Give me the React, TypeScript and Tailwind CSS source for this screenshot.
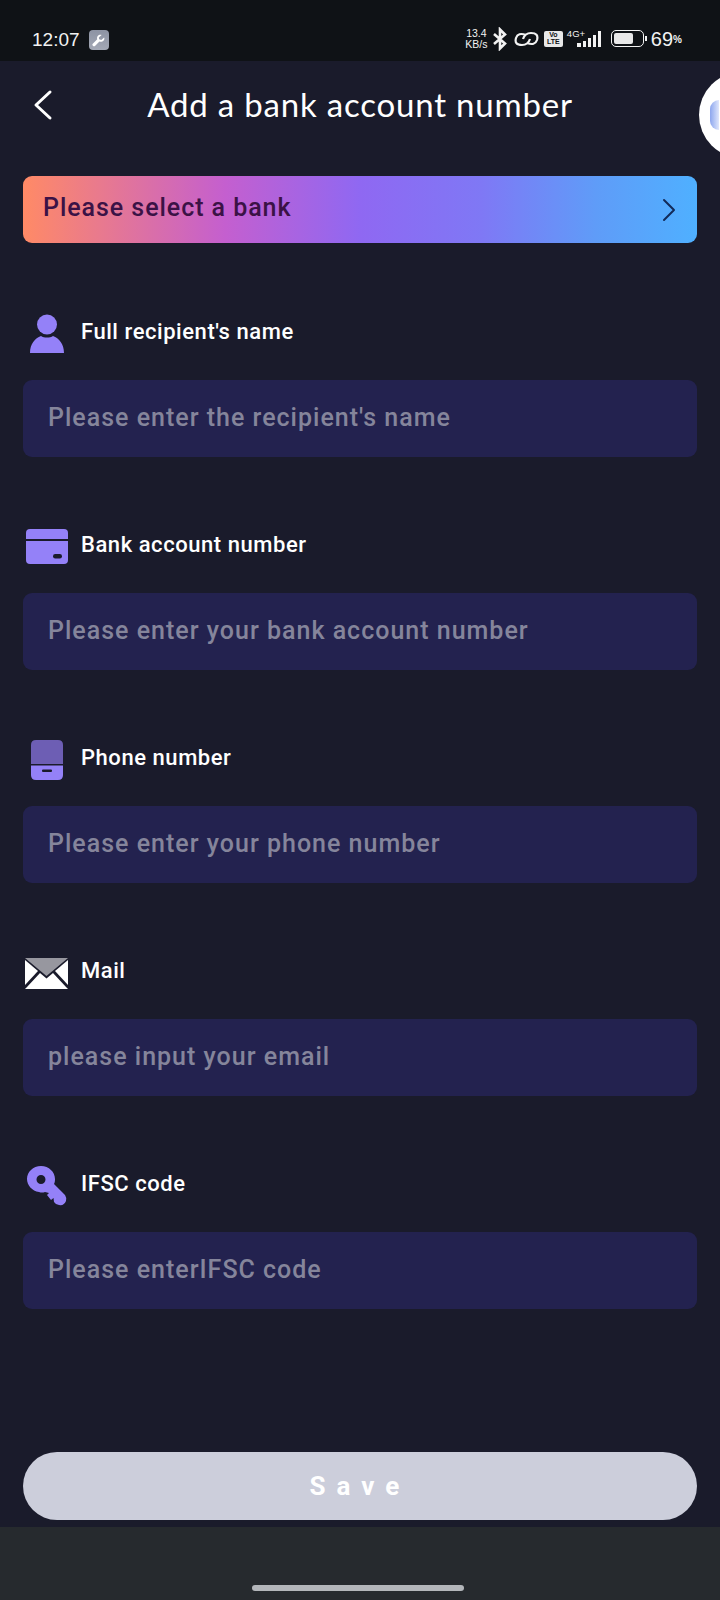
import { ReactNode } from "react";

const PersonIcon = () => (
  <svg width="36" height="40" viewBox="0 0 36 40" fill="#9481f8">
    <circle cx="18" cy="10.500" r="10" />
    <path d="M1 39 C1 30 6 24 12 22 C15 24 21 24 24 22 C30 24 35 30 35 39 Z" />
  </svg>
);

const CardIcon = () => (
  <svg width="42" height="36" viewBox="0 0 42 36">
    <path d="M0 10 V4 Q0 0 4 0 H38 Q42 0 42 4 V10 Z" fill="#9481f8" />
    <path d="M0 12 H42 V31 Q42 35 38 35 H4 Q0 35 0 31 Z" fill="#9481f8" />
    <rect x="27" y="25" width="9" height="4.500" rx="2.200" fill="#1a1b2b" />
  </svg>
);

const PhoneIcon = () => (
  <svg width="34" height="42" viewBox="0 0 34 42">
    <path d="M1 25 V6 Q1 1 6 1 H28 Q33 1 33 6 V25 Z" fill="#6d5eb4" />
    <path d="M1 26.500 H33 V36 Q33 41 28 41 H6 Q1 41 1 36 Z" fill="#9481f8" />
    <rect x="12" y="30.500" width="10" height="2.500" rx="1" fill="#1a1b2b" />
  </svg>
);

const MailIcon = () => (
  <svg width="43" height="31" viewBox="0 0 43 31">
    <path d="M0 0 H43 L21.500 18 Z" fill="#97979f" />
    <path d="M0 2 L13 13 L0 27 Z" fill="#fff" />
    <path d="M43 2 L30 13 L43 27 Z" fill="#fff" />
    <path d="M15 15 L21.500 20.500 L28 15 L41 29 L43 31 H0 L2 29 Z" fill="#fff" />
  </svg>
);

const KeyIcon = () => (
  <svg width="42" height="42" viewBox="0 0 42 42">
    <path
      fill="#9481f8"
      fillRule="evenodd"
      d="M15 1 C23 1 29 7 29 14 C29 17 28.500 18 28 19 L39 30 Q41 33 40 36 Q38 41 33 40 Q30 40 28 37 L27.500 33 L25 35 L21 30 L23 28 L19 27 Q16 28 13 27 C6 26 1 20 1 14 C1 7 7 1 15 1 Z M15 10 A4.500 4.500 0 1 0 15 19 A4.500 4.500 0 1 0 15 10 Z"
    />
  </svg>
);

const fields: { icon: ReactNode; label: string; placeholder: string }[] = [
  { icon: <PersonIcon />, label: "Full recipient's name", placeholder: "Please enter the recipient's name" },
  { icon: <CardIcon />, label: "Bank account number", placeholder: "Please enter your bank account number" },
  { icon: <PhoneIcon />, label: "Phone number", placeholder: "Please enter your phone number" },
  { icon: <MailIcon />, label: "Mail", placeholder: "please input your email" },
  { icon: <KeyIcon />, label: "IFSC code", placeholder: "Please enterIFSC code" },
];

const StatusBar = () => (
  <div className="h-[61px] bg-[#0f1216] flex items-end justify-between pb-[9px] pl-[32px] pr-[38px] text-[#f2f2f2]">
    <div className="flex items-center gap-[9px]">
      <span className="text-[19px] leading-[24px] font-['Liberation_Sans',sans-serif]">12:07</span>
      <div className="w-[20px] h-[20px] rounded-[4px] bg-gradient-to-b from-[#8d93a3] to-[#a4a9b6] flex items-center justify-center">
        <svg width="15" height="15" viewBox="0 0 24 24" fill="#fff">
          <path d="M21 7 L16.500 11 L13 10 L12.500 7 L17 3 C13 1.500 8.500 5 10 10 L2.500 17.500 C1 19 4.500 22.500 6 21 L13.500 13.500 C18 15 23 11 21 7 Z" />
        </svg>
      </div>
    </div>
    <div className="flex items-center">
      <div className="text-[10.500px] leading-[10.500px] text-center font-['Liberation_Sans',sans-serif] w-[25px]">
        <div>13.4</div>
        <div>KB/s</div>
      </div>
      <svg className="ml-[4px]" width="14" height="24" viewBox="0 0 14 24" fill="none" stroke="#f2f2f2" strokeWidth="2.600">
        <path d="M1 7 L12 16.500 L7 21.500 V2.500 L12 7.500 L1 17" />
      </svg>
      <svg className="ml-[7px]" width="25" height="18" viewBox="0 0 25 18" fill="none" stroke="#f2f2f2" strokeWidth="2.200">
        <path d="M12 5 Q4 2 2 8 Q0 15 8 15 Q14 15 16 9" />
        <path d="M13 13 Q21 16 23 10 Q25 3 17 3 Q11 3 9 9" />
      </svg>
      <div className="ml-[5px] w-[19px] h-[16px] bg-[#e8e8e8] rounded-[2px] text-[#0f1216] text-[7px] leading-[7.500px] font-bold text-center font-['Liberation_Sans',sans-serif]">
        <div>Vo</div>
        <div>LTE</div>
      </div>
      <div className="ml-[4px] flex items-end gap-[2px] h-[16px] relative w-[36px]">
        <span className="absolute left-0 top-[-2px] text-[9.500px] leading-[10px] font-['Liberation_Sans',sans-serif]">4G+</span>
        <div className="ml-[10px] w-[4px] h-[4px] bg-[#f2f2f2]" />
        <div className="w-[3px] h-[6px] bg-[#f2f2f2]" />
        <div className="w-[3px] h-[9px] bg-[#f2f2f2]" />
        <div className="w-[3px] h-[12px] bg-[#f2f2f2]" />
        <div className="w-[3px] h-[16px] bg-[#f2f2f2]" />
      </div>
      <div className="ml-[8px] w-[33px] h-[17px] rounded-[5px] border-[1.500px] border-[#f2f2f2] p-[2px]">
        <div className="w-[19px] h-full rounded-[2px] bg-[#e8e8e8]" />
      </div>
      <div className="ml-[1px] w-[2px] h-[5px] bg-[#f2f2f2]" />
      <span className="ml-[4px] text-[20px] leading-[24px] font-['Liberation_Sans',sans-serif]">69</span>
      <span className="text-[10px] font-bold leading-[24px] mt-[3px] font-['Liberation_Sans',sans-serif]">%</span>
    </div>
  </div>
);

export default function App() {
  return (
    <div className="relative w-[720px] h-[1600px] overflow-hidden bg-[#1a1b2b] flex flex-col font-['Roboto',sans-serif]">
      <StatusBar />

      <div className="h-[86px] relative flex items-center justify-center">
        <svg className="absolute left-[32px] top-[28px]" width="22" height="32" viewBox="0 0 22 32" fill="none" stroke="#fff" strokeWidth="3" strokeLinecap="round" strokeLinejoin="round">
          <path d="M18 3 L4 16 L18 29" />
        </svg>
        <h1 className="text-[33px] leading-[40px] text-white font-normal tracking-[0.8px] font-['Lato',sans-serif] -mt-[1px]">
          Add a bank account number
        </h1>
      </div>

      {/* round floating widget, cut off by the right edge */}
      <div className="absolute left-[699px] top-[72px] w-[86px] h-[86px] rounded-full bg-white flex items-center pl-[11px]">
        <div className="w-[9px] h-[30px] rounded-l-full bg-gradient-to-r from-[#8da6ee] to-[#dfe6fb] blur-[0.5px]" />
      </div>

      <div className="px-[23px] flex flex-col flex-1">
        <div className="mt-[29px] h-[67px] rounded-[9px] bg-[linear-gradient(90deg,#ff8a66_0%,#c45fcf_30%,#8f68f2_50%,#7f78f5_68%,#5f9cf8_85%,#4fb0ff_100%)] flex items-center justify-between pl-[20px] pr-[21px]">
          <span className="text-[25px] leading-[30px] font-medium tracking-[0.95px] text-[#3b1246] -mt-[3px]">Please select a bank</span>
          <svg width="14" height="24" viewBox="0 0 14 24" fill="none" stroke="#122a58" strokeWidth="2" strokeLinecap="round" strokeLinejoin="round">
            <path d="M2 2 L12 12 L2 22" />
          </svg>
        </div>

        <div className="mt-[63px] flex flex-col gap-[62px]">
          {fields.map((f) => (
            <div key={f.label} className="flex flex-col">
              <div className="h-[56px] mb-[18px] flex items-center">
                <div className="w-[58px] h-[42px] flex items-center justify-center pr-[11px] shrink-0">{f.icon}</div>
                <span className="text-[22px] leading-[26px] font-medium tracking-[0.55px] text-white -mt-[4px]">{f.label}</span>
              </div>
              <div className="h-[77px] rounded-[9px] bg-[#23224f] flex items-center pl-[25px]">
                <span className="text-[25px] leading-[30px] font-medium tracking-[1px] text-[#85859b] -mt-[2px]">{f.placeholder}</span>
              </div>
            </div>
          ))}
        </div>

        <div className="mt-auto mb-[7px] h-[68px] rounded-full bg-[#cccedb] flex items-center justify-center">
          <span className="text-[26px] leading-[30px] font-bold tracking-[11px] text-white">Save</span>
        </div>
      </div>

      <div className="h-[73px] bg-[#262a2e] flex items-end justify-center pb-[9px] pr-[4px]">
        <div className="w-[212px] h-[6px] rounded-full bg-[#b3b6ba]" />
      </div>
    </div>
  );
}
